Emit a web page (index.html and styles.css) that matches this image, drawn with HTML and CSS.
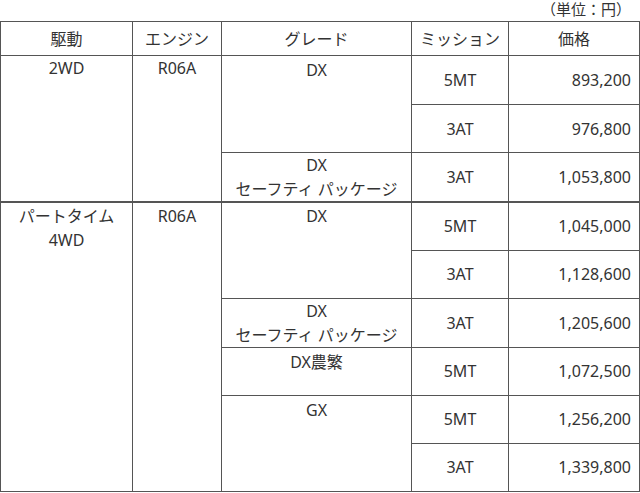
FILE: index.html
```html
<!DOCTYPE html>
<html lang="ja">
<head>
<meta charset="utf-8">
<title>価格表</title>
<link rel="stylesheet" href="styles.css">
</head>
<body>
<div class="unit">（単位：円）</div>
<table class="price-table">
  <colgroup>
    <col class="c-drive">
    <col class="c-engine">
    <col class="c-grade">
    <col class="c-mission">
    <col class="c-price">
  </colgroup>
  <thead>
    <tr class="head">
      <th>駆動</th>
      <th>エンジン</th>
      <th>グレード</th>
      <th>ミッション</th>
      <th>価格</th>
    </tr>
  </thead>
  <tbody>
    <tr class="r49">
      <td class="top" rowspan="3">2WD</td>
      <td class="top" rowspan="3">R06A</td>
      <td class="top grade" rowspan="2">DX</td>
      <td class="mid">5MT</td>
      <td class="price">893,200</td>
    </tr>
    <tr class="r48">
      <td class="mid">3AT</td>
      <td class="price">976,800</td>
    </tr>
    <tr class="r48">
      <td class="two">DX<br>セーフティ パッケージ</td>
      <td class="mid">3AT</td>
      <td class="price">1,053,800</td>
    </tr>
    <tr class="r48 group">
      <td class="top" rowspan="6">パートタイム<br>4WD</td>
      <td class="top" rowspan="6">R06A</td>
      <td class="top grade" rowspan="2">DX</td>
      <td class="mid">5MT</td>
      <td class="price">1,045,000</td>
    </tr>
    <tr class="r48">
      <td class="mid">3AT</td>
      <td class="price">1,128,600</td>
    </tr>
    <tr class="r48">
      <td class="two">DX<br>セーフティ パッケージ</td>
      <td class="mid">3AT</td>
      <td class="price">1,205,600</td>
    </tr>
    <tr class="r48">
      <td class="top grade">DX農繁</td>
      <td class="mid">5MT</td>
      <td class="price">1,072,500</td>
    </tr>
    <tr class="r48">
      <td class="top grade" rowspan="2">GX</td>
      <td class="mid">5MT</td>
      <td class="price">1,256,200</td>
    </tr>
    <tr class="r48">
      <td class="mid">3AT</td>
      <td class="price">1,339,800</td>
    </tr>
  </tbody>
</table>
</body>
</html>
```
FILE: styles.css
```css
html, body {
  margin: 0;
  padding: 0;
  background: #ffffff;
}
body {
  font-family: "Noto Sans", "Noto Sans CJK JP", sans-serif;
  font-size: 16px;
  color: #333333;
}
.unit {
  height: 21px;
  line-height: 18px;
  text-align: right;
  padding-right: 9px;
  font-size: 15px;
}
.price-table {
  width: 639px;
  border-collapse: collapse;
  table-layout: fixed;
}
.c-drive { width: 132px; }
.c-engine { width: 89px; }
.c-grade { width: 190px; }
.c-mission { width: 97px; }
.c-price { width: 131px; }
.price-table th,
.price-table td {
  border: 1px solid #555555;
  padding: 0;
  text-align: center;
  line-height: 24px;
  font-weight: normal;
}
.head { height: 34px; }
.head th { vertical-align: middle; }
.r48 { height: 48px; }
.r49 { height: 49px; }
.price-table td.top {
  vertical-align: top;
  padding-top: 0;
}
.price-table td.grade {
  padding-top: 2px;
}
.price-table td.two {
  vertical-align: middle;
}
.price-table td.mid {
  vertical-align: middle;
}
.price-table td.price {
  vertical-align: middle;
  text-align: right;
  padding-right: 8px;
}
.group td {
  border-top: 2px solid #555555;
}
.group td.top {
  padding-top: 1px;
}
```
